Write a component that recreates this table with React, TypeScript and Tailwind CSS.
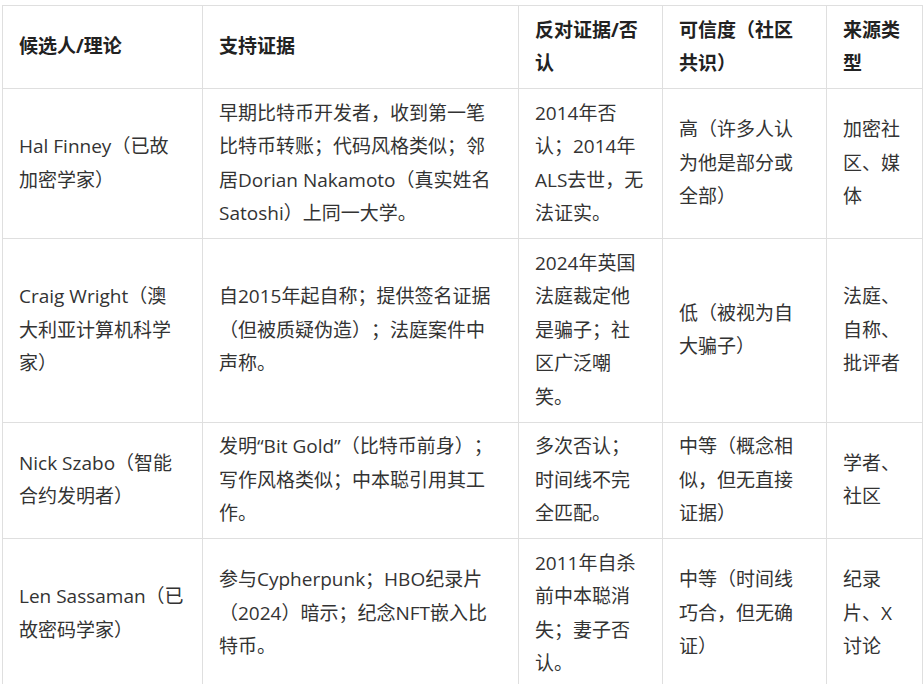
import React from 'react';

const headers = ['候选人/理论', '支持证据', '反对证据/否认', '可信度（社区共识）', '来源类型'];

const rows: string[][] = [
  [
    'Hal Finney（已故加密学家）',
    '早期比特币开发者，收到第一笔比特币转账；代码风格类似；邻居Dorian Nakamoto（真实姓名Satoshi）上同一大学。',
    '2014年否认；2014年ALS去世，无法证实。',
    '高（许多人认为他是部分或全部）',
    '加密社区、媒体',
  ],
  [
    'Craig Wright（澳\n大利亚计算机科学家）',
    '自2015年起自称；提供签名证据（但被质疑伪造）；法庭案件中声称。',
    '2024年英国法庭裁定他是骗子；社区广泛嘲笑。',
    '低（被视为自大骗子）',
    '法庭、自称、批评者',
  ],
  [
    'Nick Szabo（智能合约发明者）',
    '发明“Bit Gold”（比特币前身）；写作风格类似；中本聪引用其工作。',
    '多次否认；时间线不完全匹配。',
    '中等（概念相似，但无直接证据）',
    '学者、社区',
  ],
  [
    'Len Sassaman（已故密码学家）',
    '参与Cypherpunk；HBO纪录片（2024）暗示；纪念NFT嵌入比特币。',
    '2011年自杀前中本聪消失；妻子否认。',
    '中等（时间线巧合，但无确证）',
    '纪录片、X讨论',
  ],
];

const colWidths = ['w-[200px]', 'w-[316px]', 'w-[144px]', 'w-[164px]', 'w-[96px]'];

export default function App() {
  return (
    <div className="min-h-screen bg-white pt-[5px] pl-[2px] font-['Open_Sans','Noto_Sans_CJK_SC',sans-serif] text-[19px] leading-[33.5px] [text-spacing-trim:space-all]">
      <table className="table-fixed border-collapse w-[920px]">
        <colgroup>
          {colWidths.map((w, i) => (
            <col key={i} className={w} />
          ))}
        </colgroup>
        <thead>
          <tr>
            {headers.map((h) => (
              <th key={h} className="border border-[#dfdfdf] px-4 py-[7.5px] text-left align-middle font-bold text-[#222]">
                {h}
              </th>
            ))}
          </tr>
        </thead>
        <tbody>
          {rows.map((r, i) => (
            <tr key={i}>
              {r.map((c, j) => (
                <td key={j} className="border border-[#dfdfdf] px-4 py-[7.5px] align-middle whitespace-pre-line text-[#333]">
                  {c}
                </td>
              ))}
            </tr>
          ))}
        </tbody>
      </table>
    </div>
  );
}
